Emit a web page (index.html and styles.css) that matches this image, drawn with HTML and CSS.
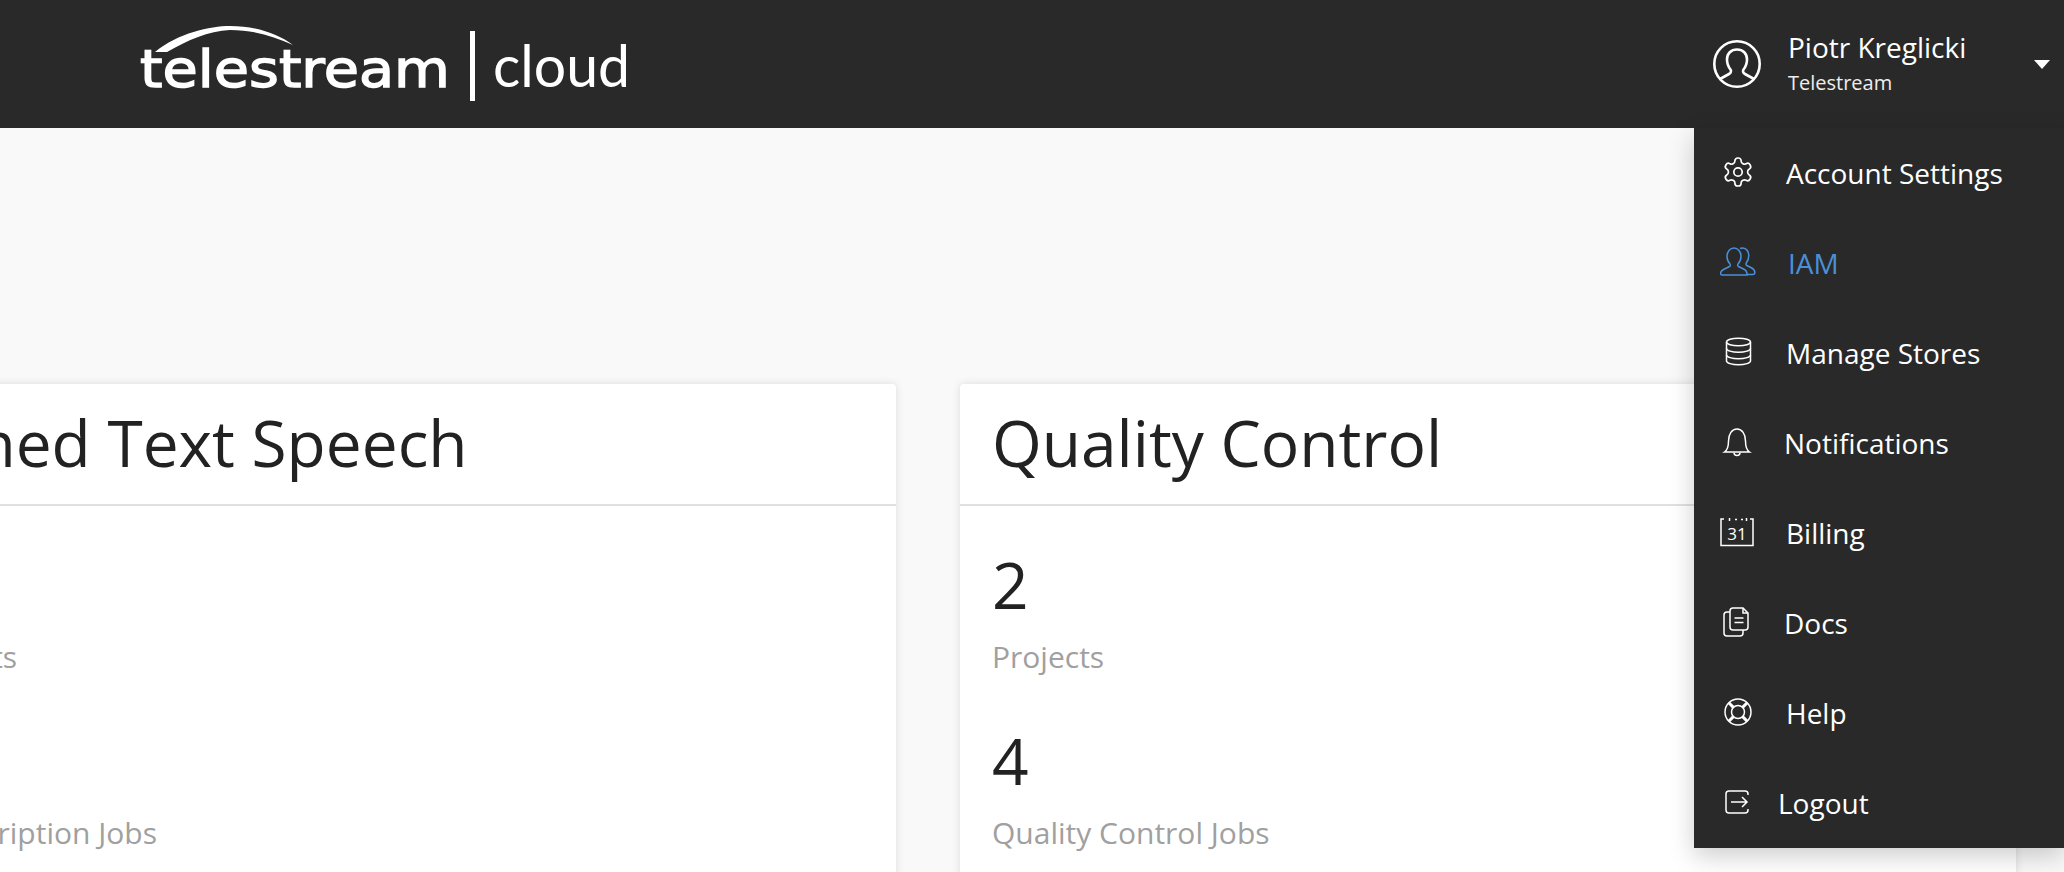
FILE: index.html
```html
<!DOCTYPE html>
<html lang="en">
<head>
  <meta charset="UTF-8" />
  <meta name="viewport" content="width=device-width, initial-scale=1.0"/>
  <title>Telestream Cloud</title>
  <link rel="stylesheet" href="styles.css">
</head>
<body>
  <header class="topbar">
    <svg class="logo" viewBox="0 0 500 88" width="500" height="88">
      <path class="logo-arc" d="M17 32C40 13 72 6 92 6C118 6 140 14 155 25C135 16 115 10 92 10C70 11 50 20 29 32Z"/>
      <text class="logo-name" x="2" y="67" textLength="310" lengthAdjust="spacingAndGlyphs">telestream</text>
      <rect class="logo-bar" x="332" y="11" width="5" height="70"/>
      <text class="logo-cloud" x="355" y="67" textLength="137" lengthAdjust="spacingAndGlyphs">cloud</text>
    </svg>

    <div class="user">
      <svg class="avatar" viewBox="0 0 48 48" width="48" height="48">
        <circle cx="24" cy="24" r="22.7"/>
        <path d="M7 39l9-5c2-1 2.500-3 1.500-4.500c-2-2.500-3.500-6-3.500-10c0-6 4-10 10-10s10 4 10 10c0 4-1.500 7.500-3.500 10c-1 1.500-.5 3.500 1.500 4.500l9 5"/>
      </svg>
      <div class="user-text">
        <div class="user-name">Piotr Kreglicki</div>
        <div class="user-org">Telestream</div>
      </div>
      <span class="caret"></span>
    </div>

    <nav class="menu">
      <a class="menu-item">
        <svg class="menu-icon" viewBox="-0.857 -0.857 25.7 25.7" width="36" height="36">
          <path class="thin" d="M12.220 2h-.44a2 2 0 0 0-2 2v.18a2 2 0 0 1-1 1.730l-.43.25a2 2 0 0 1-2 0l-.15-.08a2 2 0 0 0-2.730.73l-.22.38a2 2 0 0 0 .73 2.730l.15.1a2 2 0 0 1 1 1.720v.51a2 2 0 0 1-1 1.740l-.15.09a2 2 0 0 0-.73 2.730l.22.38a2 2 0 0 0 2.730.73l.15-.08a2 2 0 0 1 2 0l.43.25a2 2 0 0 1 1 1.730V20a2 2 0 0 0 2 2h.44a2 2 0 0 0 2-2v-.18a2 2 0 0 1 1-1.730l.43-.25a2 2 0 0 1 2 0l.15.08a2 2 0 0 0 2.730-.73l.22-.39a2 2 0 0 0-.73-2.730l-.15-.08a2 2 0 0 1-1-1.740v-.5a2 2 0 0 1 1-1.740l.15-.09a2 2 0 0 0 .73-2.730l-.22-.38a2 2 0 0 0-2.730-.73l-.15.08a2 2 0 0 1-2 0l-.43-.25a2 2 0 0 1-1-1.730V4a2 2 0 0 0-2-2z"/>
          <circle class="thin" cx="12" cy="12" r="3"/>
        </svg>
        <span>Account Settings</span>
      </a>
      <a class="menu-item active nudge-iam">
        <svg class="menu-icon" viewBox="0 0 36 36" width="36" height="36">
          <path d="M2 31a1.500 1.500 0 0 1-1.500-1.500c0-2 1-3 3-4l6-3c1-.5 1-1.500.5-2.500c-2-2-3-5-3-8c0-4 3-8 7-8s7 4 7 8c0 3-1 6-3 8c-.5 1-.5 2 .5 2.500l6 3c2 1 2.500 2 2.500 5.500z"/>
          <path d="M20 4.500c.5-.3 2-.5 2.800-.5c3.500 0 6 3.500 6 7.500c0 3-1 5.500-2.500 7.500c-.5 1-.5 2 .5 2.500l5 2.500c2 1 3 2.500 3 4.500a2 2 0 0 1-2 2h-6"/>
        </svg>
        <span>IAM</span>
      </a>
      <a class="menu-item">
        <svg class="menu-icon" viewBox="0 0 36 36" width="36" height="36">
          <ellipse cx="18.500" cy="8" rx="12" ry="3.800"/>
          <path d="M6.500 8v19c0 2 5.500 3.800 12 3.800s12-1.800 12-3.800V8"/>
          <path d="M6.500 14.500c0 2 5.500 3.800 12 3.800s12-1.800 12-3.800M6.500 21c0 2 5.500 3.800 12 3.800s12-1.800 12-3.800"/>
        </svg>
        <span>Manage Stores</span>
      </a>
      <a class="menu-item nudge-back">
        <svg class="menu-icon" viewBox="0 0 36 36" width="36" height="36">
          <path d="M4.500 28c3-2 4-5 4-11c0-7 3.500-12 8.500-12s8.500 5 8.500 12c0 6 1 9 4 11z"/>
          <path d="M14 28.500a3 3 0 0 0 6 0"/>
        </svg>
        <span>Notifications</span>
      </a>
      <a class="menu-item">
        <svg class="menu-icon" viewBox="0 0 36 36" width="36" height="36">
          <path d="M4 5H1V31.500H33V5H30"/>
          <path d="M9.500 4v3M15 5.500h2M21 5.500h2M26.500 4v3"/>
          <text class="cal-day" x="17" y="26">31</text>
        </svg>
        <span>Billing</span>
      </a>
      <a class="menu-item nudge-back">
        <svg class="menu-icon" viewBox="0 0 36 36" width="36" height="36">
          <path d="M13 4h10l5 5v14a3 3 0 0 1-3 3H13a3 3 0 0 1-3-3V7a3 3 0 0 1 3-3z"/>
          <path d="M23 4v5h5M14.500 14h9M14.500 18.500h9"/>
          <path d="M10 8H7a3 3 0 0 0-3 3V29a3 3 0 0 0 3 3h13a3 3 0 0 0 3-3v-3"/>
        </svg>
        <span>Docs</span>
      </a>
      <a class="menu-item">
        <svg class="menu-icon" viewBox="0 0 36 36" width="36" height="36">
          <circle cx="18" cy="18" r="13"/>
          <circle cx="18" cy="18" r="6.500"/>
          <path class="thick" d="M8.800 8.800L13.400 13.400M27.200 8.800L22.600 13.400M8.800 27.200L13.400 22.600M27.200 27.200L22.600 22.600"/>
        </svg>
        <span>Help</span>
      </a>
      <a class="menu-item nudge-logout">
        <svg class="menu-icon" viewBox="0 0 36 36" width="36" height="36">
          <path d="M28 11v-1a3 3 0 0 0-3-3H9a3 3 0 0 0-3 3V26a3 3 0 0 0 3 3H25a3 3 0 0 0 3-3v-1"/>
          <path d="M11 18H27M22 13l5 5l-5 5"/>
        </svg>
        <span>Logout</span>
      </a>
    </nav>
  </header>

  <main class="cards">
    <section class="card card-tts">
      <h2 class="card-title">Timed Text Speech</h2>
      <div class="card-body">
        <div class="stat-num">2</div>
        <div class="stat-label">Projects</div>
        <div class="stat-num">4</div>
        <div class="stat-label">Transcription Jobs</div>
      </div>
    </section>
    <section class="card card-qc">
      <h2 class="card-title">Quality Control</h2>
      <div class="card-body">
        <div class="stat-num">2</div>
        <div class="stat-label">Projects</div>
        <div class="stat-num">4</div>
        <div class="stat-label">Quality Control Jobs</div>
      </div>
    </section>
  </main>
</body>
</html>
```

FILE: styles.css
```css
html, body {
  height: 100%;
}
body {
  margin: 0;
  background-color: #f9f9f9;
  font-family: "Open Sans", sans-serif;
  overflow: hidden;
}

/* top bar */
.topbar {
  position: relative;
  z-index: 2;
  display: flex;
  justify-content: space-between;
  align-items: center;
  height: 128px;
  padding: 0 14px 0 138px;
  background-color: #292929;
  color: #fff;
}
.logo {
  display: block;
}
.logo-arc,
.logo-bar {
  fill: #fff;
}
.logo-name {
  fill: #fff;
  stroke: #fff;
  stroke-width: 1.4;
  font-family: "DejaVu Sans", sans-serif;
  font-size: 52px;
}
.logo-cloud {
  fill: #fff;
  font-family: Lato, sans-serif;
  font-size: 58px;
}
.user {
  display: flex;
  align-items: center;
  width: 337px;
}
.avatar {
  flex: none;
  fill: none;
  stroke: #fff;
  stroke-width: 2.6;
}
.user-text {
  margin-left: 27px;
  padding-bottom: 3px;
}
.user-name {
  font-size: 28px;
  line-height: 38px;
}
.user-org {
  margin-top: 3px;
  font-size: 20px;
  line-height: 28px;
  color: #eee;
}
.caret {
  margin-left: auto;
  width: 0;
  height: 0;
  border-left: 8px solid transparent;
  border-right: 8px solid transparent;
  border-top: 9px solid #fff;
}

/* dropdown */
.menu {
  position: absolute;
  top: 128px;
  right: 0;
  width: 370px;
  background-color: #292929;
  box-shadow: 0 8px 24px rgba(0, 0, 0, 0.2);
}
.menu-item {
  display: flex;
  align-items: center;
  height: 90px;
  padding-left: 26px;
  font-size: 28px;
  line-height: 38px;
  color: #fff;
}
.menu-item span {
  margin-left: 30px;
}
.menu-icon {
  flex: none;
  margin-top: -2px;
  fill: none;
  stroke: currentColor;
  stroke-width: 1.5;
}
.menu-icon .thin {
  stroke-width: 1.2;
}
.menu-icon .thick {
  stroke-width: 3;
}
.cal-day {
  fill: currentColor;
  stroke: none;
  font-size: 17px;
  text-anchor: middle;
}
.menu-item.active {
  color: #4a90d9;
}
.nudge-iam span {
  margin-left: 32px;
}
.nudge-back span {
  margin-left: 28px;
}
.nudge-logout span {
  margin-left: 22px;
}

/* cards */
.cards {
  display: flex;
  justify-content: flex-end;
  gap: 64px;
  padding: 256px 48px 0 0;
}
.card {
  flex: none;
  height: 620px;
  background: #fff;
  border-radius: 4px;
  box-shadow: 0 0 8px rgba(0, 0, 0, 0.12);
}
.card-tts {
  width: 1023px;
}
.card-qc {
  width: 1056px;
}
.card-title {
  height: 120px;
  margin: 0;
  padding-left: 32px;
  border-bottom: 2px solid #e0e0e0;
  font-size: 64px;
  font-weight: 400;
  line-height: 118px;
  color: #222;
}
.card-body {
  padding: 35px 32px 0;
}
.stat-num {
  font-size: 64px;
  line-height: 88px;
  color: #222;
}
.stat-label {
  margin: 8px 0 40px;
  font-size: 30px;
  line-height: 40px;
  color: #a0a0a0;
}
```
